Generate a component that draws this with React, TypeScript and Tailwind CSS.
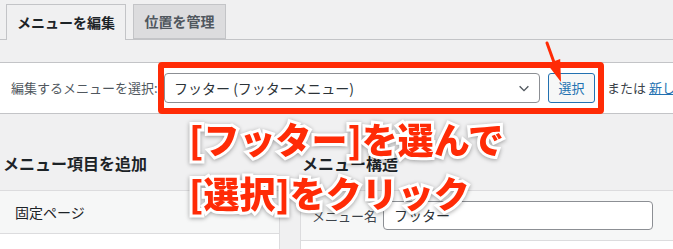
import React from 'react';

const RED = 'text-[#ff2b06]';

const Tabs = () => (
  <div className="h-[40px] pt-[4px] pl-[6px] flex items-start gap-[7px] border-b border-[#c3c4c7]">
    <div className="w-[120px] h-[36px] border border-b-0 border-[#c3c4c7] bg-[#f0f0f1] flex items-center justify-center text-[14px] font-bold text-[#1d2327]">
      メニューを編集
    </div>
    <div className="w-[93px] h-[35px] border border-[#c3c4c7] bg-[#dcdcde] flex items-center justify-center text-[14px] font-bold text-[#50575e]">
      位置を管理
    </div>
  </div>
);

const ManageMenus = () => (
  <div className="mt-[22px] h-[52px] bg-white border-y border-[#c3c4c7] pl-[11px] flex items-center">
    <span className="w-[153px] shrink-0 text-[13px] text-[#50575e] whitespace-nowrap">編集するメニューを選択:</span>
    <div className="w-[376px] h-[30px] shrink-0 border border-[#8c8f94] rounded-[4px] bg-white pl-[9px] pr-[8px] flex items-center justify-between">
      <span className="text-[14px] text-[#2c3338] whitespace-nowrap">フッター (フッターメニュー)</span>
      <svg width="14" height="14" viewBox="0 0 16 16" fill="none" stroke="#50575e" strokeWidth="1.6">
        <path d="M3 6l5 5 5-5" />
      </svg>
    </div>
    <button className="ml-[8px] w-[47px] h-[30px] shrink-0 border border-[#2271b1] rounded-[3px] bg-[#f6f7f7] text-[13px] text-[#2271b1]">
      選択
    </button>
    <span className="ml-[12px] text-[13px] text-[#3c434a] whitespace-nowrap">
      または <span className="text-[#2271b1] underline">新しいメニューを作成しましょう</span>
    </span>
  </div>
);

const Columns = () => (
  <div className="flex">
    <div className="w-[280px] shrink-0">
      <h2 className="h-[76px] pt-[37px] pl-[3px] text-[16px] leading-[24px] font-semibold text-[#1d2327]">メニュー項目を追加</h2>
      <div className="border-t border-r border-[#dcdcde]">
        <div className="h-[43px] bg-[#f6f7f7] border-b border-[#dcdcde] pl-[15px] flex items-center text-[14px] text-[#1d2327]">
          固定ページ
        </div>
        <div className="h-[20px] bg-white" />
      </div>
    </div>
    <div className="w-[20px] shrink-0" />
    <div className="flex-1">
      <h2 className="h-[76px] pt-[37px] pl-[2px] text-[16px] leading-[24px] font-semibold text-[#1d2327]">メニュー構造</h2>
      <div className="border-t border-l border-[#dcdcde]">
        <div className="bg-[#f6f7f7] border-b border-[#dcdcde] py-[10px] pl-[11px] flex items-center">
          <span className="w-[71px] text-[13px] text-[#3c434a]">メニュー名</span>
          <div className="w-[270px] h-[29px] border border-[#8c8f94] rounded-[4px] bg-white pl-[10px] flex items-center text-[14px] text-[#2c3338]">
            フッター
          </div>
        </div>
        <div className="h-[20px] bg-white" />
      </div>
    </div>
  </div>
);

const Annotation = () => (
  <>
    <div className="absolute left-[158px] top-[62px] w-[446px] h-[52px] border-[6px] border-[#ff2b06] rounded-[4px]" />
    <svg className="absolute left-[540px] top-[38px]" width="30" height="50" viewBox="0 0 30 50">
      <path d="M7 5L13.6 23.3" stroke="#ff2b06" strokeWidth="3" strokeLinecap="round" />
      <path d="M21 44L20.2 20.9L7 25.7Z" fill="#ff2b06" />
    </svg>
    <div
      className={`absolute left-[189px] top-[111px] text-[36px] leading-[54px] font-black whitespace-nowrap ${RED} [-webkit-text-stroke:6px_#fff] [paint-order:stroke_fill] drop-shadow-[0_1px_2px_rgba(0,0,0,0.35)]`}
    >
      <div>[フッター]を選んで</div>
      <div>[選択]をクリック</div>
    </div>
  </>
);

export default function App() {
  return (
    <div className="relative w-[673px] h-[249px] overflow-hidden bg-[#f0f0f1] font-['Noto_Sans_CJK_JP','Noto_Sans',sans-serif]">
      <Tabs />
      <ManageMenus />
      <Columns />
      <Annotation />
    </div>
  );
}
